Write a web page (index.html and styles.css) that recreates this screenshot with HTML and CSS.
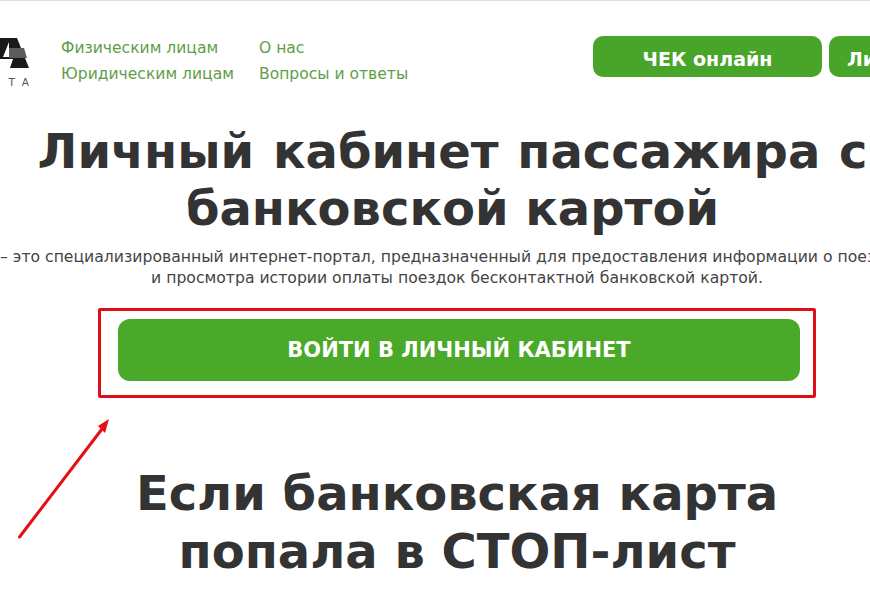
FILE: index.html
```html
<!DOCTYPE html>
<html lang="ru">
<head>
<meta charset="utf-8">
<title>Личный кабинет пассажира</title>
<link rel="stylesheet" href="styles.css">
</head>
<body>
<div class="page">
  <header class="header">
    <div class="logo">
      <svg class="logo-mark" viewBox="0 0 29 30" width="29" height="30" aria-hidden="true">
        <path d="M0 0H17L29 30H10L13 21H0Z" fill="#1a1a1a"/>
        <path d="M9 10H24L27 20H9Z" fill="#5c5c5c"/>
        <path d="M3 19L9 4V19Z" fill="#fff"/>
      </svg>
      <div class="logo-sub"><span>T</span><span>A</span></div>
    </div>
    <nav class="nav">
      <a class="nav-link" href="#">Физическим лицам</a>
      <a class="nav-link" href="#">О нас</a>
      <a class="nav-link" href="#">Юридическим лицам</a>
      <a class="nav-link" href="#">Вопросы и ответы</a>
    </nav>
    <div class="actions">
      <a class="btn btn-check" href="#">ЧЕК онлайн</a>
      <a class="btn btn-cabinet" href="#">Личный кабинет</a>
    </div>
  </header>
  <main class="main">
    <h1 class="title title-first"><span class="title-wide">Личный кабинет пассажира с</span><br>банковской картой</h1>
    <p class="lead lead-first">– это специализированный интернет-портал, предназначенный для предоставления информации о поездках</p>
    <p class="lead">и просмотра истории оплаты поездок бесконтактной банковской картой.</p>
    <div class="callout">
      <a class="cta" href="#">ВОЙТИ В ЛИЧНЫЙ КАБИНЕТ</a>
    </div>
    <h2 class="title title-second">Если банковская карта<br>попала в СТОП-лист</h2>
  </main>
  <svg class="arrow" viewBox="0 0 110 120" width="110" height="120" aria-hidden="true">
    <path d="M10.5 118L93 10" stroke="#e30f14" stroke-width="3" stroke-linecap="round" fill="none"/>
    <path d="M100 0L89 7L96 14Z" fill="#e30f14"/>
  </svg>
</div>
</body>
</html>
```
FILE: styles.css
```css
html, body {
  margin: 0;
  padding: 0;
  height: 100%;
  overflow: hidden;
  background: #fff;
}
body {
  font-family: "DejaVu Sans", Verdana, sans-serif;
  color: #333;
}
.page {
  position: relative;
  width: 914px;
  height: 598px;
  box-sizing: border-box;
  border-top: 1px solid #ddd;
}
.header {
  display: flex;
  align-items: flex-start;
  padding-top: 35px;
  height: 87px;
}
.logo {
  flex: none;
  width: 29px;
  margin-right: 32px;
  padding-top: 2px;
}
.logo-mark { display: block; }
.logo-sub {
  display: flex;
  justify-content: flex-end;
  gap: 7px;
  font-size: 10.5px;
  color: #555;
  line-height: 10px;
  margin-top: 9px;
}
.nav {
  flex: none;
  display: grid;
  grid-template-columns: 198px 170px;
  grid-auto-rows: 26px;
  width: 532px;
  font-size: 15.55px;
  line-height: 24px;
}
.nav-link {
  color: #5f9e48;
  text-decoration: none;
  white-space: nowrap;
}
.actions {
  flex: none;
  display: flex;
  gap: 7px;
}
.btn {
  display: block;
  height: 41px;
  line-height: 46px;
  background: #48a52a;
  color: #fff;
  font-weight: 700;
  font-size: 19px;
  text-decoration: none;
  text-align: center;
  border-radius: 10px;
  white-space: nowrap;
}
.btn-check { width: 229px; }
.btn-cabinet { padding: 0 18px; }
.main {
  text-align: center;
}
.title {
  margin: 0;
  font-size: 48px;
  font-weight: 700;
  line-height: 58px;
  color: #333;
  white-space: nowrap;
}
.title-first {
  margin-right: 9px;
  line-height: 57px;
}
.title-wide { word-spacing: 2px; }
.lead {
  margin: 0;
  font-size: 15.65px;
  line-height: 21px;
  color: #444;
  white-space: nowrap;
}
.lead-first {
  margin-top: 9px;
  text-align: left;
}
.callout {
  width: 718px;
  height: 90px;
  box-sizing: border-box;
  margin: 20px 0 0 98px;
  padding: 8px 13px 0 17px;
  border: 3px solid #de0f16;
  border-radius: 2px;
}
.cta {
  display: block;
  height: 62px;
  line-height: 62px;
  border-radius: 12px;
  background: #4aa928;
  color: #fff;
  font-weight: 700;
  font-size: 21px;
  text-decoration: none;
}
.title-second { margin-top: 66px; }
.arrow {
  position: absolute;
  left: 9px;
  top: 418px;
}
```
